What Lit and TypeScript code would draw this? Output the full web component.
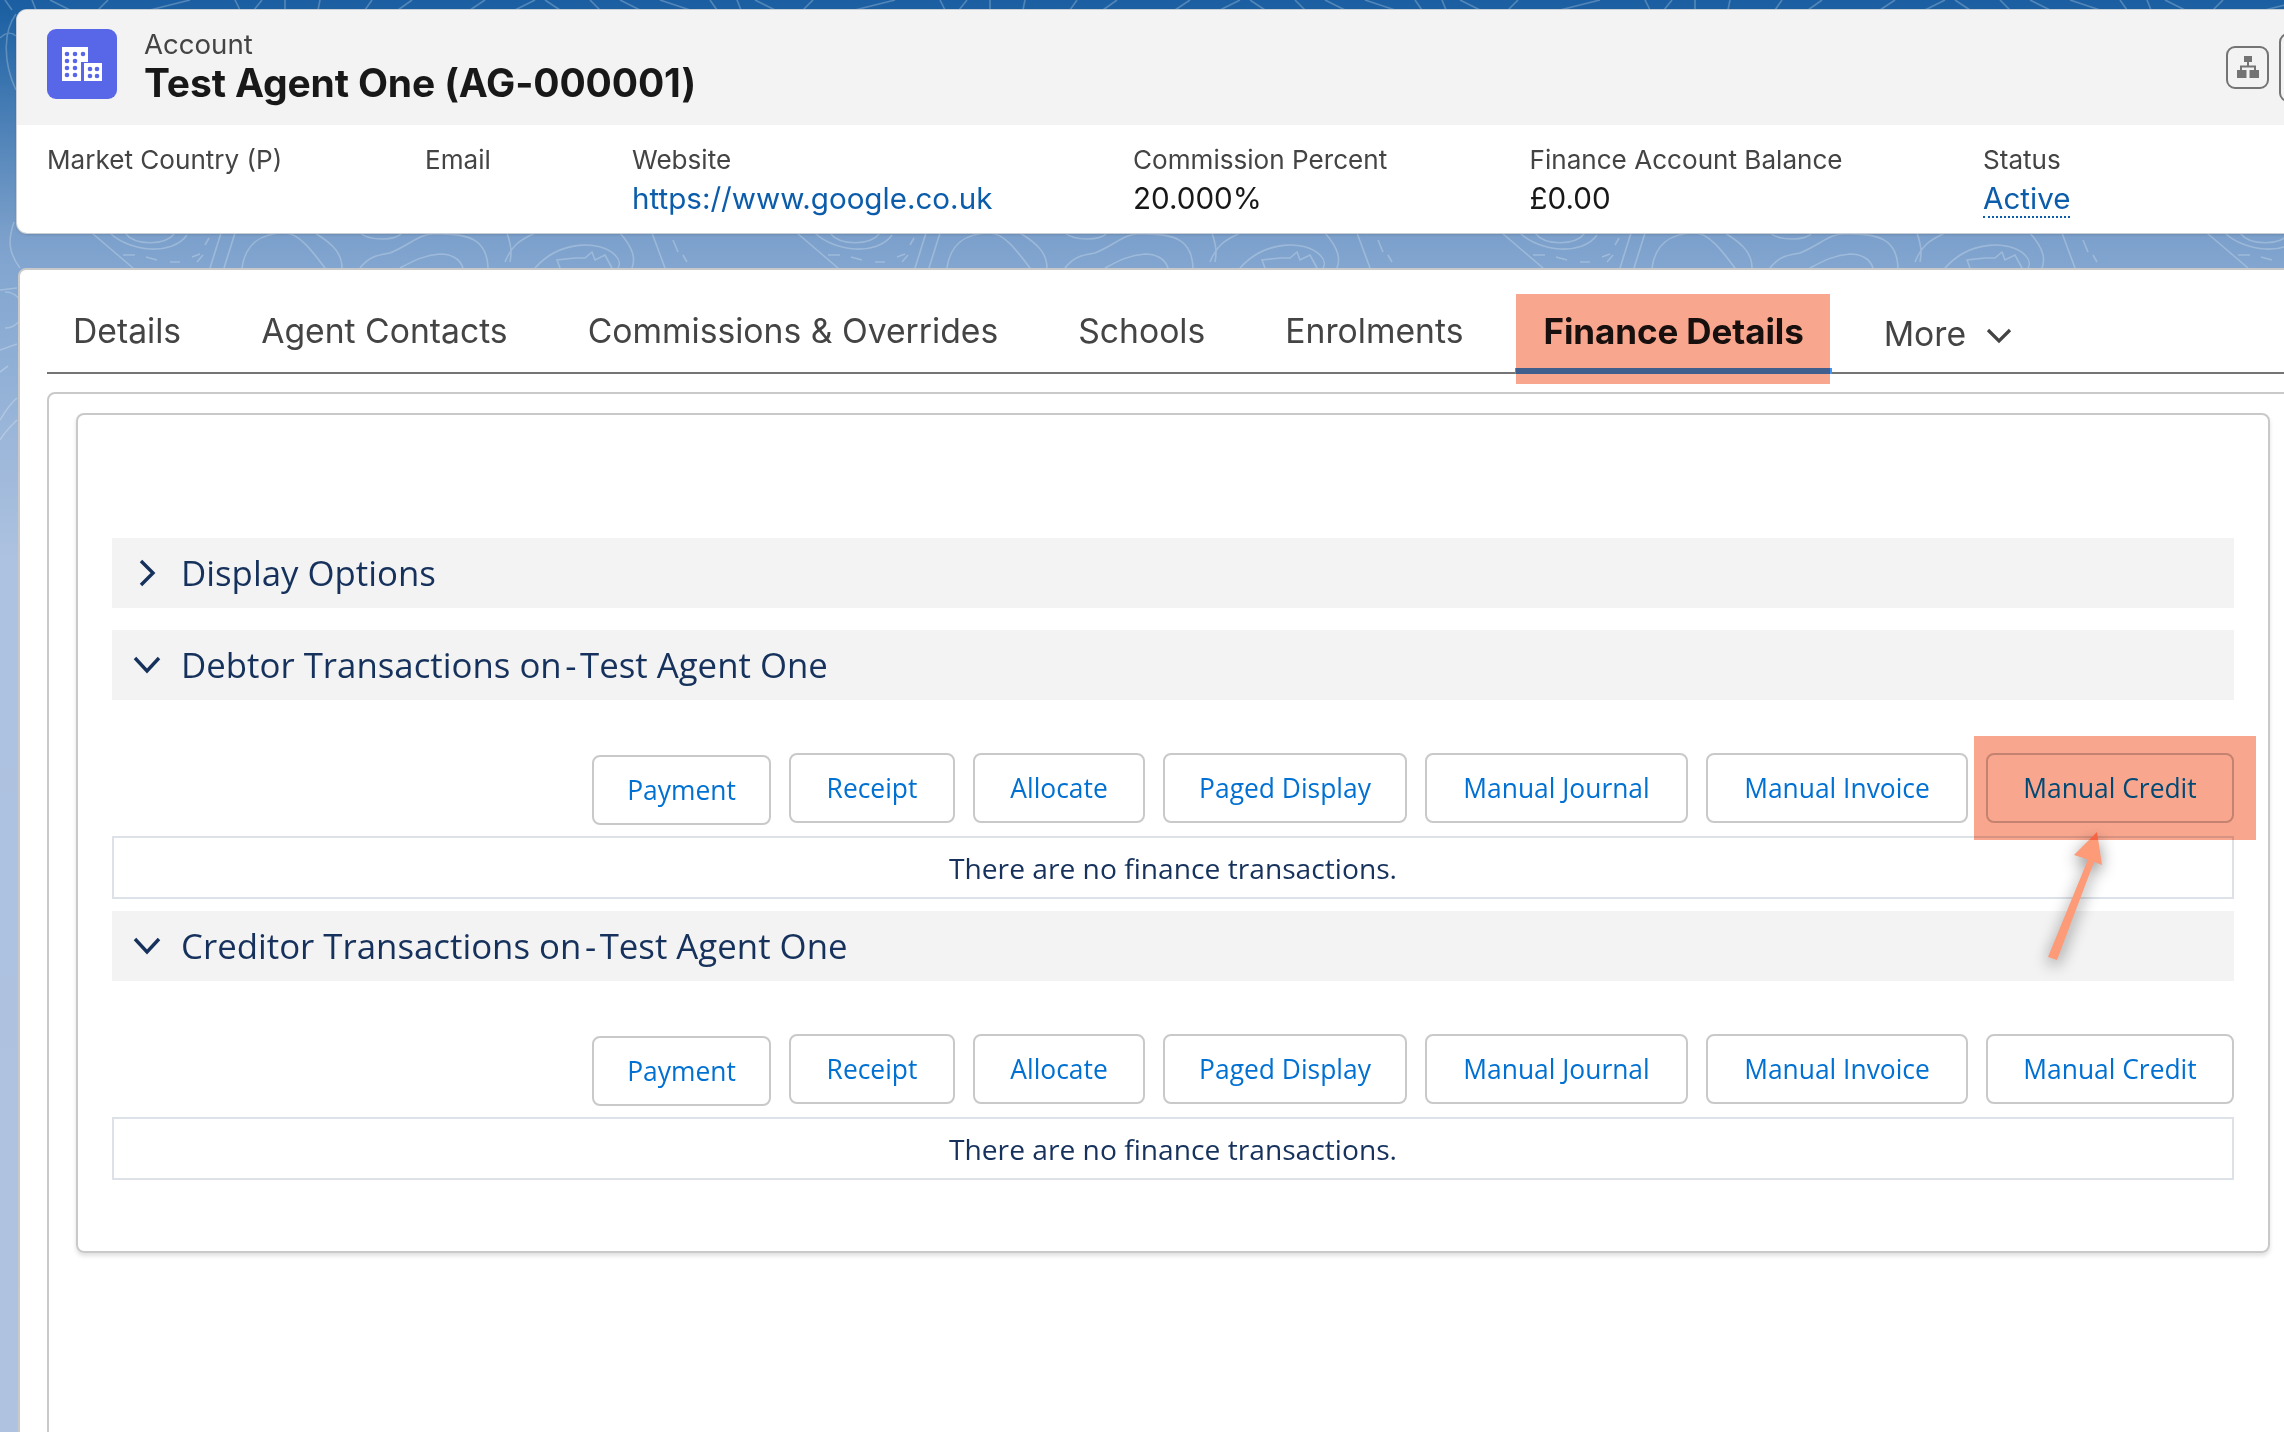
import { LitElement, html, css, svg } from "lit";
import { customElement } from "lit/decorators.js";

const TABS = ["Details", "Agent Contacts", "Commissions & Overrides", "Schools", "Enrolments", "Finance Details"];
const BUTTONS = ["Payment", "Receipt", "Allocate", "Paged Display", "Manual Journal", "Manual Invoice", "Manual Credit"];

@customElement("app-root")
export class AppRoot extends LitElement {
  static styles = css`
    :host {
      display: block;
      width: 2284px;
      height: 1432px;
      overflow: hidden;
      position: relative;
      font-family: Inter, "Liberation Sans", sans-serif;
      background: linear-gradient(180deg, #1b5fa2 0, #1d61a3 12px, #7a9fca 233px, #82a6d0 268px, #adc2e0 560px, #afc3e1 100%);
    }
    .page {
      position: relative;
      height: 100%;
      box-sizing: border-box;
      padding: 10px 0 0 17px;
      display: flex;
      flex-direction: column;
    }
    .backdrop { position: absolute; left: 0; top: 0; }
    .bgline { fill: none; stroke: #fff; stroke-opacity: 0.24; stroke-width: 1.6; }

    .head-card {
      position: relative;
      height: 223px;
      margin-right: -40px;
      background: #fff;
      border-radius: 10px;
      box-shadow: 0 0 0 1px #c9cfd6, 0 1px 3px rgba(0, 0, 0, 0.25);
      display: flex;
      flex-direction: column;
      overflow: hidden;
      flex: none;
    }
    .head-top {
      height: 115px;
      background: #f3f3f3;
      box-sizing: border-box;
      padding: 19px 0 0 30px;
      display: flex;
      position: relative;
    }
    .logo { width: 70px; height: 70px; border-radius: 9px; background: #5867e8; flex: none; display: block; }
    .titles { margin-left: 27px; margin-top: -1px; }
    .eyebrow { font-size: 27.6px; line-height: 33px; color: #444; }
    .title { font-size: 39px; line-height: 44px; font-weight: 700; color: #181818; letter-spacing: -0.14px; }
    .actions { position: absolute; left: 2209px; top: 23px; display: flex; gap: 10px; align-items: center; }
    .iconbtn {
      width: 43px; height: 43px; box-sizing: border-box; border: 2px solid #747474; border-radius: 9px;
      display: flex; align-items: center; justify-content: center;
    }
    .iconbtn.big { width: 60px; height: 69px; }
    .fields {
      display: grid;
      grid-template-columns: 378px 207px 501px 396.5px 453.5px 1fr;
      padding: 19px 0 0 30px;
    }
    .label { font-size: 26.1px; line-height: 32px; color: #444; white-space: nowrap; }
    .value { font-size: 29.6px; line-height: 38px; margin-top: 3px; color: #181818; white-space: nowrap; }
    .link { color: #0b5cab; }
    .dotted { border-bottom: 2px dotted #0b5cab; line-height: 35px; display: inline-block; margin-top: 2px; }

    .main-card {
      flex: 1;
      margin: 35px -60px -20px 1px;
      background: #fff;
      border: 2px solid #c9c9c9;
      border-radius: 8px;
      padding: 24px 0 0 27px;
      display: flex;
      flex-direction: column;
      min-height: 0;
    }
    .tabs {
      display: flex;
      gap: 24px;
      height: 78px;
      border-bottom: 2px solid #747474;
      flex: none;
    }
    .tab {
      height: 80px;
      margin-bottom: -2px;
      box-sizing: border-box;
      padding: 0 28px 8px;
      display: flex;
      align-items: center;
      gap: 20px;
      font-size: 33.7px;
      color: #444;
      white-space: nowrap;
    }
    .tab:first-child { padding-left: 26px; }
    .tab.active {
      color: #181818;
      font-size: 35px;
      letter-spacing: -0.1px;
      font-weight: 700;
      border-bottom: 6px solid #4192fb;
      padding-bottom: 1px;
    }
    .tab.more { padding-top: 6px; }
    .tab.more svg { margin-top: 6px; }
    .outer {
      flex: 1;
      margin-top: 18px;
      box-sizing: border-box;
      border: 2px solid #c9c9c9;
      border-radius: 8px;
      padding: 19px 0 0 27px;
      min-height: 0;
    }
    .inner {
      width: 2194px;
      box-sizing: border-box;
      height: 840px;
      border: 2px solid #c9c9c9;
      border-radius: 8px;
      box-shadow: 0 3px 4px rgba(0, 0, 0, 0.12);
      padding: 123px 34px 0;
      font-family: "Open Sans", "Noto Sans", sans-serif;
      color: #16325c;
    }
    .section {
      height: 70px;
      background: #f3f3f3;
      display: flex;
      align-items: center;
      font-size: 34.8px;
      white-space: nowrap;
      margin-bottom: 22px;
      padding-bottom: 2px;
      box-sizing: border-box;
    }
    .dash { word-spacing: -5.5px; }
    .chev { width: 69px; display: flex; justify-content: center; flex: none; padding-top: 2px; }
    .buttons { display: flex; justify-content: flex-end; gap: 18px; height: 72px; margin-top: 53px; margin-bottom: 11px; align-items: flex-start; }
    .btn {
      height: 70px;
      box-sizing: border-box;
      border: 2px solid #c9c9c9;
      border-radius: 8px;
      background: #fff;
      color: #0070d2;
      font-size: 26.4px;
      display: flex;
      align-items: center;
      justify-content: center;
      white-space: nowrap;
    }
    .btn.low { margin-top: 2px; }
    .empty {
      height: 63px;
      box-sizing: border-box;
      border: 2px solid #dde2e8;
      display: flex;
      align-items: center;
      justify-content: center;
      font-size: 28.2px;
      margin-bottom: 12px;
    }
    .marker { position: absolute; background: #f9a68e; mix-blend-mode: multiply; pointer-events: none; }
    .marker.tabmark { left: 1516px; top: 294px; width: 314px; height: 90px; }
    .marker.btnmark { left: 1974px; top: 736px; width: 282px; height: 104px; }
    .arrow { position: absolute; left: 2020px; top: 810px; filter: drop-shadow(0 5px 8px rgba(0, 0, 0, 0.45)); }
  `;

  private widths = [179, 166, 172, 244, 263, 262, 248];

  private group(prefix: string) {
    return html`
      <div class="section"><span class="chev"><svg width="28" height="18" viewBox="0 0 28 18"><path d="M2 2 L14 15 L26 2" fill="none" stroke="#16325c" stroke-width="3.4"/></svg></span><span>${prefix}<span class="dash"> - </span>Test Agent One</span></div>
      <div class="buttons">
        ${BUTTONS.map(
          (b, i) => html`<div class="btn ${i === 0 ? "low" : ""}" style="width:${this.widths[i]}px">${b}</div>`
        )}
      </div>
      <div class="empty">There are no finance transactions.</div>
    `;
  }

  private backdrop() {
    return html`<svg class="backdrop" width="2284" height="700" viewBox="0 0 2284 700">
      <defs>
        <pattern id="topo" x="0" y="0" width="705" height="700" patternUnits="userSpaceOnUse">
          <path class="bgline" d="M92 233 L133 268 M110 233 C130 252 172 256 187 235 M125 233 C135 246 165 246 175 233 M123 255 L135 255 M146 257 L157 260 M170 262 L180 262 M192 257 L200 254 M197 262 L203 255 M205 245 L209 238 M221 233 L210 268 M235 233 L224 268 M242 268 C245 245 260 233 285 233 C300 233 315 255 325 268 M315 233 C335 245 342 255 342 268 M360 233 C370 241 395 241 402 233 M360 268 C370 255 380 255 390 253 C410 245 420 233 435 234 C470 233 487 240 488 268 M400 268 C415 260 425 255 440 254 C450 254 460 258 463 268 M507 233 C511 245 512 252 510 262 M505 262 C512 245 520 240 535 233 M535 268 C560 240 600 240 615 255 C620 260 620 265 618 268 M620 233 C635 250 635 260 632 268 M560 268 L557 260 L575 258 L585 258 L592 252 L595 260 L605 255 L612 268 M652 233 L665 268 M673 240 L678 252 M683 255 L687 262 M714 233 C712 245 712 255 722 260 L730 268"/>
          <path class="bgline" d="M5 0 L12 10 M32 0 L36 10 M50 0 L70 10 M108 0 L98 10 M150 10 L190 0 M235 0 L240 10 M262 0 L254 10 M285 0 L285 10 M320 0 L318 10 M372 0 L365 10 M398 10 L412 0 M470 10 L485 0 M515 10 L535 0 M545 0 L560 10 M590 0 L600 10 M620 0 L640 10 M660 0 L690 10"/>
        </pattern>
      </defs>
      <rect width="2284" height="700" fill="url(#topo)"/>
      <path class="bgline" d="M16 14 C4 30 2 60 16 90 M0 38 C6 32 12 32 16 36 M14 222 C8 240 8 252 20 268 M0 290 L17 288 M5 292 A18 18 0 1 1 5 328 M0 350 L17 344 M0 372 L8 366 M0 420 C6 410 12 402 17 398 M0 440 C6 430 12 425 17 420"/>
    </svg>`;
  }

  render() {
    const dots = [[20, 25], [28, 25], [36, 25], [20, 32], [28, 32], [20, 39], [28, 39], [20, 46], [28, 46], [43, 40], [50, 40], [43, 47], [50, 47]];
    return html`
      ${this.backdrop()}
      <div class="page">
        <section class="head-card">
          <div class="head-top">
            <svg class="logo" viewBox="0 0 70 70">
              <path fill="#fff" d="M15 18 H41 V33 H34 V52 H15 Z M37 34 H55 V52 H37 Z"/>
              <g fill="#5867e8">
                ${dots.map(([x, y]) => svg`<circle cx=${x} cy=${y} r="2.3"></circle>`)}
              </g>
            </svg>
            <div class="titles">
              <div class="eyebrow">Account</div>
              <div class="title">Test Agent One (AG-000001)</div>
            </div>
            <div class="actions">
              <div class="iconbtn">
                <svg width="24" height="24" viewBox="0 0 24 24"><path fill="#747474" d="M8 0 H16 V6 H13 V9.5 H20 V14 H23 V22 H13.5 V14 H18 V11.5 H6 V14 H10.5 V22 H1 V14 H4 V9.5 H11 V6 H8 Z"/></svg>
              </div>
              <div class="iconbtn big"></div>
            </div>
          </div>
          <div class="fields">
            <div><div class="label">Market Country (P)</div></div>
            <div><div class="label">Email</div></div>
            <div><div class="label">Website</div><div class="value link">https://www.google.co.uk</div></div>
            <div><div class="label">Commission Percent</div><div class="value">20.000%</div></div>
            <div><div class="label">Finance Account Balance</div><div class="value">£0.00</div></div>
            <div><div class="label">Status</div><div class="value link"><span class="dotted">Active</span></div></div>
          </div>
        </section>
        <section class="main-card">
          <nav class="tabs">
            ${TABS.map((t) => html`<div class="tab ${t === "Finance Details" ? "active" : ""}">${t}</div>`)}
            <div class="tab more">More
              <svg width="26" height="16" viewBox="0 0 26 16"><path d="M2 2 L13 13 L24 2" fill="none" stroke="#444" stroke-width="3.2"/></svg>
            </div>
          </nav>
          <div class="outer">
            <div class="inner">
              <div class="section">
                <span class="chev"><svg width="18" height="28" viewBox="0 0 18 28"><path d="M3 2 L15 14 L3 26" fill="none" stroke="#16325c" stroke-width="3.4"/></svg></span><span>Display Options</span>
              </div>
              ${this.group("Debtor Transactions on")}
              ${this.group("Creditor Transactions on")}
            </div>
          </div>
        </section>
      </div>
      <svg class="arrow" width="100" height="160" viewBox="0 0 100 160">
        <path fill="#fd9a78" d="M77 22 L54 45 L68 49.5 L28 147 L37 150 L74 52 L82 55 Z"/>
      </svg>
      <div class="marker tabmark"></div>
      <div class="marker btnmark"></div>
    `;
  }
}
